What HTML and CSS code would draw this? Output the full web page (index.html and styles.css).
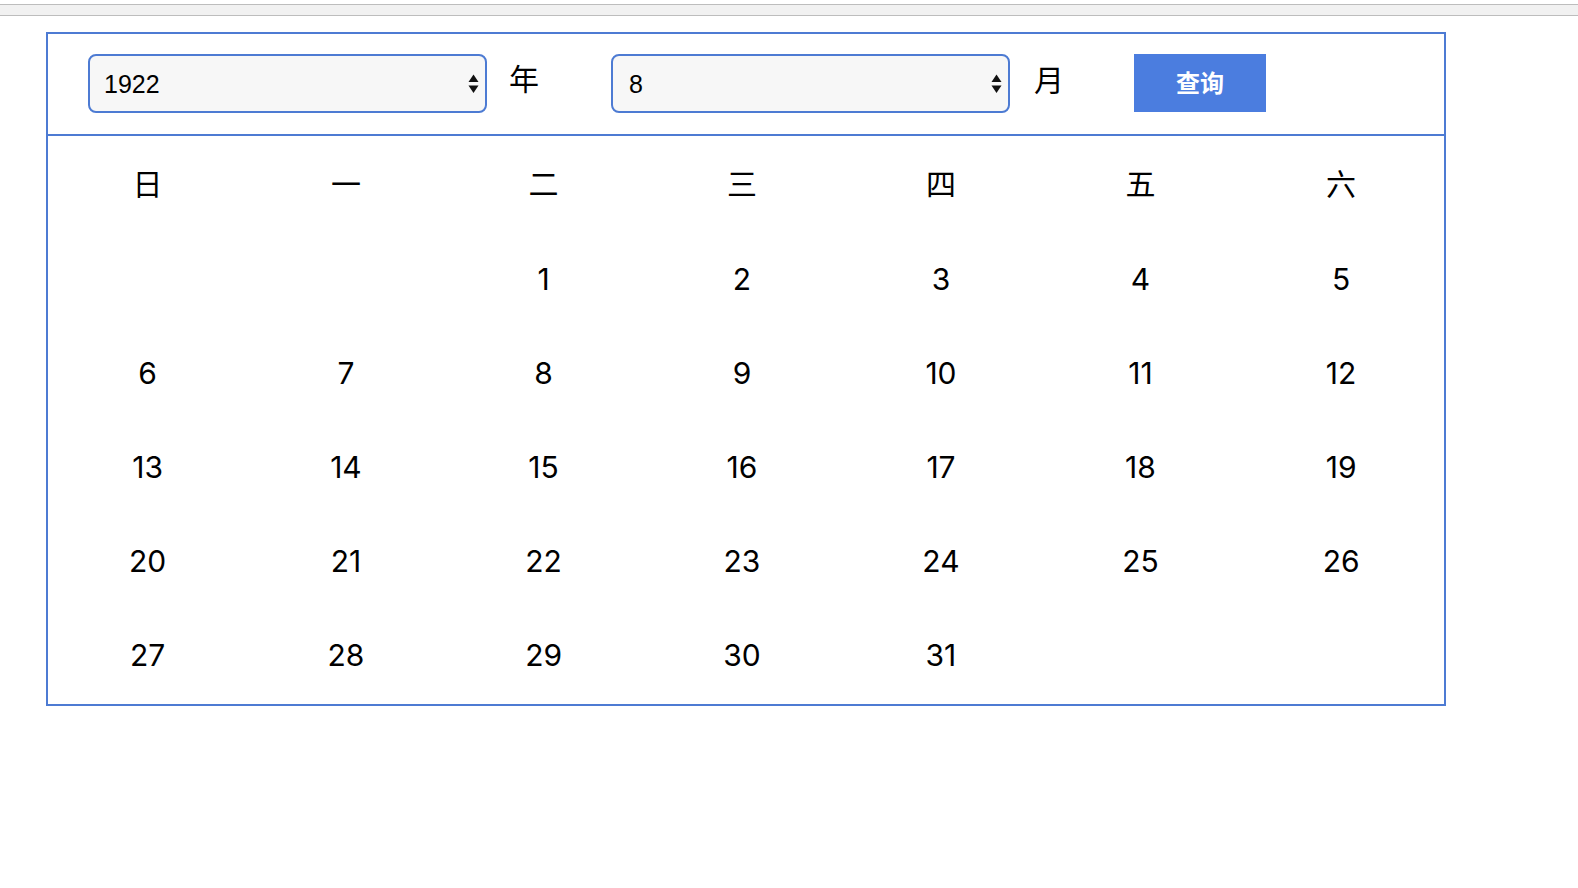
FILE: index.html
```html
<!DOCTYPE html>
<html lang="zh-CN">
<head>
<meta charset="utf-8">
<title>日历</title>
<link rel="stylesheet" href="styles.css">
</head>
<body>
<div class="topbar"></div>
<div class="calendar">
  <div class="toolbar">
    <div class="select-wrap">
      <select class="picker">
        <option>1922</option>
      </select>
      <svg class="arrows" width="11" height="22" viewBox="0 0 11 22"><polygon points="0.5,9 5.5,1.5 10.5,9" fill="#111"/><polygon points="0.5,12.5 10.5,12.5 5.5,20" fill="#111"/></svg>
    </div>
    <span class="unit">年</span>
    <div class="select-wrap second">
      <select class="picker">
        <option>8</option>
      </select>
      <svg class="arrows" width="11" height="22" viewBox="0 0 11 22"><polygon points="0.5,9 5.5,1.5 10.5,9" fill="#111"/><polygon points="0.5,12.5 10.5,12.5 5.5,20" fill="#111"/></svg>
    </div>
    <span class="unit month">月</span>
    <button class="query">查询</button>
  </div>
  <div class="grid">
    <div class="cell head">日</div>
    <div class="cell head">一</div>
    <div class="cell head">二</div>
    <div class="cell head">三</div>
    <div class="cell head">四</div>
    <div class="cell head">五</div>
    <div class="cell head">六</div>
    <div class="cell"></div>
    <div class="cell"></div>
    <div class="cell">1</div>
    <div class="cell">2</div>
    <div class="cell">3</div>
    <div class="cell">4</div>
    <div class="cell">5</div>
    <div class="cell">6</div>
    <div class="cell">7</div>
    <div class="cell">8</div>
    <div class="cell">9</div>
    <div class="cell">10</div>
    <div class="cell">11</div>
    <div class="cell">12</div>
    <div class="cell">13</div>
    <div class="cell">14</div>
    <div class="cell">15</div>
    <div class="cell">16</div>
    <div class="cell">17</div>
    <div class="cell">18</div>
    <div class="cell">19</div>
    <div class="cell">20</div>
    <div class="cell">21</div>
    <div class="cell">22</div>
    <div class="cell">23</div>
    <div class="cell">24</div>
    <div class="cell">25</div>
    <div class="cell">26</div>
    <div class="cell">27</div>
    <div class="cell">28</div>
    <div class="cell">29</div>
    <div class="cell">30</div>
    <div class="cell">31</div>
    <div class="cell"></div>
    <div class="cell"></div>
  </div>
</div>
</body>
</html>
```

FILE: styles.css
```css
html, body {
  margin: 0;
  padding: 0;
  background: #ffffff;
}

body {
  font-family: "Liberation Sans", Arial, "Noto Sans CJK SC", sans-serif;
  color: #000;
}

.topbar {
  margin-top: 4px;
  height: 10px;
  background: #f1f1f1;
  border-top: 1px solid #bdbdbd;
  border-bottom: 1px solid #bdbdbd;
}

.calendar {
  box-sizing: border-box;
  width: 1400px;
  margin: 16px 0 0 46px;
  border: 2px solid #4d7bd3;
}

.toolbar {
  box-sizing: border-box;
  height: 102px;
  padding: 20px 0 0 40px;
  border-bottom: 2px solid #4d7bd3;
  display: flex;
  align-items: flex-start;
}

.select-wrap {
  position: relative;
  width: 399px;
  height: 59px;
}

.picker {
  appearance: none;
  -webkit-appearance: none;
  box-sizing: border-box;
  width: 100%;
  height: 100%;
  margin: 0;
  padding: 0 30px 0 14px;
  border: 2px solid #4d7bd3;
  border-radius: 8px;
  background: #f7f7f7;
  font-family: "Liberation Sans", Arial, sans-serif;
  font-size: 25px;
  color: #000;
  outline: none;
}

.second .picker {
  padding-left: 16px;
}

.arrows {
  position: absolute;
  right: 8px;
  top: 19px;
  pointer-events: none;
}

.unit {
  width: 30px;
  margin: 8px 72px 0 22px;
  font-family: "Noto Sans CJK SC", sans-serif;
  font-size: 30px;
  line-height: 30px;
  text-align: center;
}

.unit.month {
  margin: 9px 70px 0 24px;
}

.query {
  width: 132px;
  height: 58px;
  margin: 0;
  padding: 0 0 4px;
  border: none;
  background: #4b7ddf;
  color: #fff;
  font-family: "Noto Sans CJK SC", sans-serif;
  font-size: 24px;
  font-weight: 700;
  cursor: pointer;
}

.grid {
  display: grid;
  grid-template-columns: 199.2px 197.5px 197.8px 198.9px 199.2px 199.7px 203.7px;
  grid-auto-rows: 94px;
  padding: 2px 0 2px 0;
}

.cell {
  display: flex;
  align-items: center;
  justify-content: center;
  font-family: Inter, "Liberation Sans", sans-serif;
  font-size: 30px;
}

.cell:nth-child(7n) {
  padding-right: 2px;
}

.cell.head {
  font-family: "Noto Sans CJK SC", sans-serif;
  padding-bottom: 6px;
}
```
